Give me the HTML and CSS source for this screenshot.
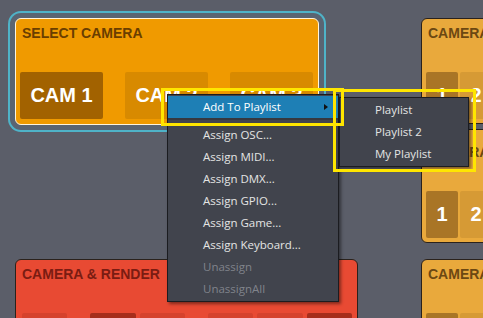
FILE: index.html
```html
<!DOCTYPE html>
<html lang="en">
<head>
  <meta charset="UTF-8">
  <title>Camera Panels</title>
  <link rel="stylesheet" href="styles.css">
</head>
<body>

<main class="board">

  <div class="col-left">
    <section class="panel panel-orange selected">
      <div class="panel-title">SELECT CAMERA</div>
      <div class="cams">
        <div class="cam active">CAM 1</div>
        <div class="cam">CAM 2</div>
        <div class="cam">CAM 3</div>
      </div>
    </section>

    <section class="panel panel-red">
      <div class="panel-title">CAMERA &amp; RENDER</div>
      <div class="reds">
        <div class="rbtn"></div>
        <div class="rbtn dark gap"></div>
        <div class="rbtn"></div>
        <div class="rbtn gap"></div>
        <div class="rbtn"></div>
        <div class="rbtn dark"></div>
      </div>
    </section>
  </div>

  <div class="col-right">
    <section class="panel panel-gold first">
      <div class="panel-title">CAMERA</div>
      <div class="nums">
        <div class="num active">1</div>
        <div class="num">2</div>
      </div>
    </section>
    <section class="panel panel-gold second">
      <div class="panel-title">CAMERA</div>
      <div class="nums">
        <div class="num active">1</div>
        <div class="num">2</div>
      </div>
    </section>
    <section class="panel panel-gold third">
      <div class="panel-title">CAMERA</div>
      <div class="nums">
        <div class="num active"></div>
        <div class="num"></div>
      </div>
    </section>
  </div>

</main>

<div class="menu">
  <div class="menu-item hover">Add To Playlist <span class="arrow"></span></div>
  <div class="menu-sep"></div>
  <div class="menu-item">Assign OSC...</div>
  <div class="menu-item">Assign MIDI...</div>
  <div class="menu-item">Assign DMX...</div>
  <div class="menu-item">Assign GPIO...</div>
  <div class="menu-item">Assign Game...</div>
  <div class="menu-item">Assign Keyboard...</div>
  <div class="menu-item disabled">Unassign</div>
  <div class="menu-item disabled">UnassignAll</div>
</div>

<div class="menu submenu">
  <div class="menu-item">Playlist</div>
  <div class="menu-item">Playlist 2</div>
  <div class="menu-item">My Playlist</div>
</div>

<div class="mark mark-item"></div>
<div class="mark mark-sub"></div>

</body>
</html>
```

FILE: styles.css
```css
body {
  margin: 0;
  background-color: #5b5e69;
  font-family: 'Liberation Sans', Arial, sans-serif;
  overflow: hidden;
}

.board {
  display: flex;
  gap: 63px;
  padding: 18px 0 0 15px;
  width: 600px;
}

.col-left {
  width: 343px;
}

.col-right {
  width: 160px;
}

/* panels */

.panel {
  box-sizing: border-box;
  border: 1px solid #2a221c;
  border-radius: 6px;
  padding: 0 5px 0 4px;
}

.panel-title {
  font-weight: bold;
  font-size: 14px;
  line-height: 29px;
  height: 53px;
  padding-left: 2px;
  white-space: nowrap;
}

.panel-orange {
  width: 304px;
  height: 107px;
  background-color: #f09a00;
  border-color: #fff4dc;
}

.panel-orange .panel-title {
  color: #6a3e00;
}

.selected {
  box-shadow: 0 0 0 5px #5a6472, 0 0 0 7px #4fb3c8;
}

.cams {
  display: grid;
  grid-template-columns: repeat(3, 83px);
  gap: 22px;
}

.cam {
  height: 47px;
  border-radius: 2px;
  background-color: #d88a00;
  color: #fff;
  font-weight: bold;
  font-size: 20px;
  line-height: 47px;
  text-align: center;
}

.cam.active {
  background-color: #a26200;
}

.panel-red {
  margin-top: 134px;
  height: 90px;
  background-color: #e84a33;
}

.panel-red .panel-title {
  color: #7a1c12;
}

.reds {
  display: flex;
  gap: 2px;
}

.rbtn {
  width: 46px;
  height: 30px;
  border-radius: 2px;
  background-color: #d5422d;
  margin-left: 2px;
}

.rbtn.gap {
  margin-left: 21px;
}

.rbtn.dark {
  background-color: #a62e1c;
}

.panel-gold {
  background-color: #e9a93c;
}

.panel-gold .panel-title {
  color: #6c4812;
}

.panel-gold.first {
  height: 106px;
}

.panel-gold.second {
  margin-top: 5px;
  height: 114px;
}

.panel-gold.second .panel-title {
  line-height: 44px;
  height: 61px;
}

.panel-gold.third {
  margin-top: 16px;
  height: 90px;
}

.nums {
  display: flex;
  gap: 2px;
}

.num {
  width: 32px;
  height: 47px;
  border-radius: 2px;
  background-color: #d69a35;
  color: #fff;
  font-weight: bold;
  font-size: 20px;
  line-height: 47px;
  text-align: center;
}

.num.active {
  background-color: #a97526;
}

/* context menu */

.menu {
  position: absolute;
  left: 167px;
  top: 94px;
  width: 170px;
  padding: 1px 0;
  background-color: #41444d;
  border: 1px solid #1b1c20;
  box-shadow: 2px 2px 3px rgba(0, 0, 0, 0.45);
  font-family: 'Open Sans', sans-serif;
  font-size: 11.5px;
}

.menu-item {
  position: relative;
  height: 22px;
  line-height: 22px;
  padding-left: 35px;
  color: #e4e4e4;
}

.menu-item.hover {
  background-color: #1e7fb5;
  color: #fff;
}

.menu-item.disabled {
  color: #80838b;
}

.menu-sep {
  height: 2px;
  margin-bottom: 4px;
  background-color: #36383f;
}

.arrow {
  position: absolute;
  right: 10px;
  top: 8px;
  border-left: 4px solid #111;
  border-top: 3px solid transparent;
  border-bottom: 3px solid transparent;
}

.submenu {
  left: 339px;
  top: 97px;
  width: 128px;
}

/* highlight marks */

.mark {
  position: absolute;
  box-sizing: border-box;
  border: 3px solid #ffe600;
}

.mark-item {
  left: 161px;
  top: 88px;
  width: 183px;
  height: 38px;
}

.mark-sub {
  left: 333px;
  top: 89px;
  width: 143px;
  height: 83px;
}
```
